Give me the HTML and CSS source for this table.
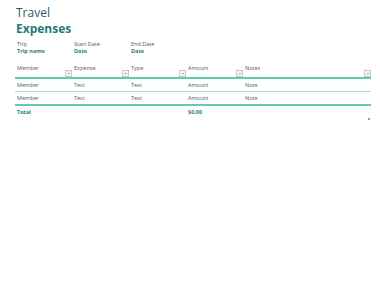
FILE: index.html
```html
<!DOCTYPE html>
<html>
<head>
<meta charset="utf-8">
<link rel="stylesheet" href="styles.css">
</head>
<body>
<div class="page">
  <div class="titles">
    <div class="t1">Travel</div>
    <div class="t2">Expenses</div>
  </div>
  <div class="info">
    <div class="info-col"><div class="lbl">Trip</div><div class="val">Trip name</div></div>
    <div class="info-col"><div class="lbl">Start Date</div><div class="val">Date</div></div>
    <div class="info-col"><div class="lbl">End Date</div><div class="val">Date</div></div>
  </div>
  <div class="table">
    <div class="row head">
      <div class="cell"><span>Member</span><i class="dd"></i></div>
      <div class="cell"><span>Expense</span><i class="dd"></i></div>
      <div class="cell"><span>Type</span><i class="dd"></i></div>
      <div class="cell"><span>Amount</span><i class="dd"></i></div>
      <div class="cell"><span>Notes</span><i class="dd"></i></div>
    </div>
    <div class="row body">
      <div class="cell">Member</div><div class="cell">Text</div><div class="cell">Text</div><div class="cell">Amount</div><div class="cell">Note</div>
    </div>
    <div class="row body last">
      <div class="cell">Member</div><div class="cell">Text</div><div class="cell">Text</div><div class="cell">Amount</div><div class="cell">Note</div>
    </div>
    <div class="row total">
      <div class="cell">Total</div><div class="cell"></div><div class="cell"></div><div class="cell">$0.00</div><div class="cell"></div>
    </div>
    <div class="handle-row"><i class="handle"></i></div>
  </div>
</div>
</body>
</html>
```
FILE: styles.css
```css
html, body { margin: 0; padding: 0; background: #fff; }
body { font-family: "Open Sans", "Noto Sans", sans-serif; }
.page { width: 380px; height: 295px; padding-top: 5px; box-sizing: border-box; }
.titles { padding-left: 16px; }
.t1 { font-size: 12px; line-height: 16px; color: #1f5c68; }
.t2 { font-size: 12px; line-height: 16px; font-weight: 700; color: #257a78; }
.info { display: flex; padding-left: 17px; margin-top: 4px; }
.info-col { width: 57px; }
.lbl { font-size: 5.5px; line-height: 7px; color: #4a5a60; }
.val { font-size: 5.5px; line-height: 7px; font-weight: 700; color: #2a7d7b; }
.table { margin: 10px 0 0 15px; width: 356px; }
.row { display: grid; grid-template-columns: 57px 57px 57px 57px 1fr; }
.cell { font-size: 5.5px; color: #4f5b60; padding-left: 2px; position: relative; }
.head { height: 12px; border-bottom: 2px solid #62c8b4; }
.head .cell { line-height: 7px; }
.dd { position: absolute; right: 0; bottom: 0; width: 5px; height: 5px; border: 1px solid #c9c9c9; background: #f4f4f4; box-sizing: content-box; }
.dd::after { content: ""; position: absolute; left: 1.5px; top: 2px; border-left: 1px solid transparent; border-right: 1px solid transparent; border-top: 1px solid #555; }
.body { height: 12px; line-height: 12px; border-bottom: 1px solid #a5e0d1; }
.body.last { border-bottom: 2px solid #62c8b4; }
.total { height: 12px; line-height: 12px; }
.total .cell { font-weight: 700; color: #2a7d7b; }
.handle-row { display: flex; justify-content: flex-end; }
.handle { width: 2px; height: 2px; background: #8c9ac8; margin-right: 1px; }
```
